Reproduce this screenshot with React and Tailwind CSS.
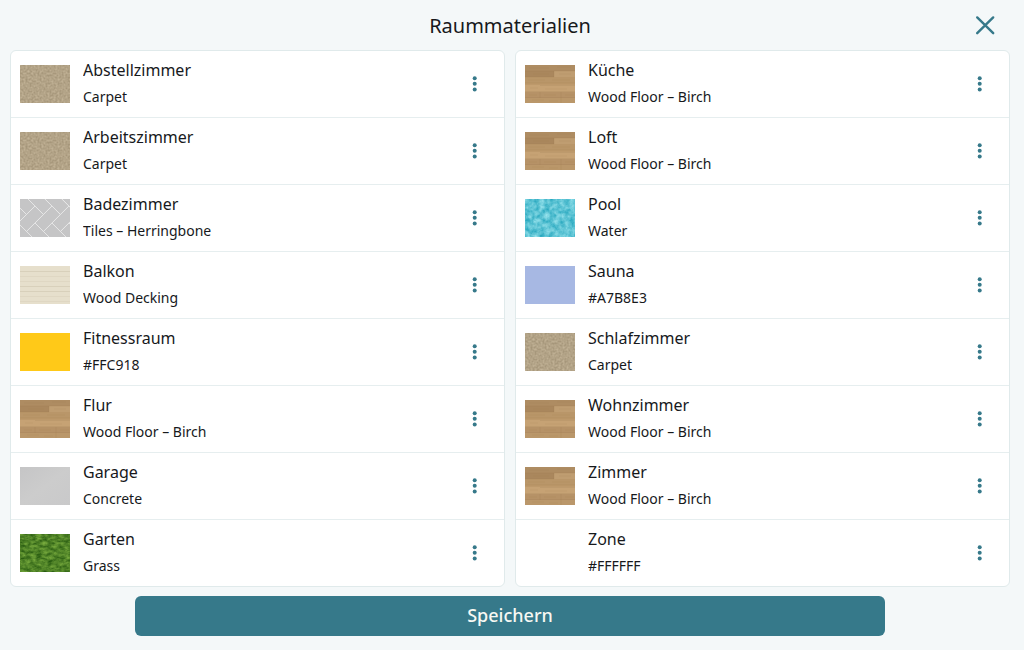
import { useId } from "react";

const leftRooms = [
  { name: "Abstellzimmer", material: "Carpet" },
  { name: "Arbeitszimmer", material: "Carpet" },
  { name: "Badezimmer", material: "Tiles – Herringbone" },
  { name: "Balkon", material: "Wood Decking" },
  { name: "Fitnessraum", material: "#FFC918" },
  { name: "Flur", material: "Wood Floor – Birch" },
  { name: "Garage", material: "Concrete" },
  { name: "Garten", material: "Grass" },
];

const rightRooms = [
  { name: "Küche", material: "Wood Floor – Birch" },
  { name: "Loft", material: "Wood Floor – Birch" },
  { name: "Pool", material: "Water" },
  { name: "Sauna", material: "#A7B8E3" },
  { name: "Schlafzimmer", material: "Carpet" },
  { name: "Wohnzimmer", material: "Wood Floor – Birch" },
  { name: "Zimmer", material: "Wood Floor – Birch" },
  { name: "Zone", material: "#FFFFFF" },
];

// Grain laid over a base colour; the matrix maps noise to tints around that colour.
function Grain({ base, frequency, matrix, octaves = 2 }) {
  const id = useId();
  return (
    <>
      <filter id={id} x="0" y="0" width="100%" height="100%" colorInterpolationFilters="sRGB">
        <feTurbulence type="fractalNoise" baseFrequency={frequency} numOctaves={octaves} seed="4" />
        <feColorMatrix values={matrix} />
      </filter>
      <rect width="50" height="38" fill={base} />
      <rect width="50" height="38" filter={`url(#${id})`} />
    </>
  );
}

function Birch() {
  return (
    <>
      <rect width="50" height="38" fill="#bc9a6f" />
      <rect width="50" height="6" fill="#ae8c62" />
      <rect y="6" width="29" height="6" fill="#aa875d" />
      <rect x="29" y="6" width="21" height="6" fill="#bf9d71" />
      <rect y="12" width="50" height="6" fill="#b99669" />
      <rect y="18" width="50" height="3" fill="#bd996b" />
      <rect y="20" width="50" height="7" fill="#c6a274" />
      <rect y="27" width="50" height="6" fill="#b69267" />
      <rect y="33" width="50" height="5" fill="#ba976a" />
      <path
        d="M0 6h50M0 12h29M29 6v6M0 18h50M15 20.5h35M0 26.5h50M15 27v6M36 27v11M0 32.5h50"
        stroke="#98744c"
        strokeWidth="0.5"
        opacity="0.35"
        fill="none"
      />
      <path
        d="M4 3h20M32 2h14M8 9h16M34 9h12M3 15h17M27 15h18M5 23h8M20 24h22M4 30h8M19 30h12M40 30h9M7 35h12M24 36h9"
        stroke="#9e7950"
        strokeWidth="0.6"
        opacity="0.2"
        fill="none"
      />
    </>
  );
}

// Each pair is one tile along the diagonal and one across it, on a grid of tile widths.
const tilePairs = [-4, 0, 4].flatMap((shift) =>
  [-5, -4, -3, -2, -1, 0, 1, 2, 3, 4, 5].map((step) => [shift + step, step]),
);

function Herringbone() {
  return (
    <>
      <rect width="50" height="38" fill="#c5c5c6" />
      <g transform="translate(15 24) rotate(-45)" fill="none" stroke="#e6e6e6" strokeWidth="0.9">
        {tilePairs.map(([a, b]) => (
          <g key={`${a},${b}`}>
            <rect x={a * 12} y={b * 12} width="24" height="12" />
            <rect x={(a + 2) * 12} y={(b - 1) * 12} width="12" height="24" />
          </g>
        ))}
      </g>
    </>
  );
}

function Decking() {
  return (
    <>
      <rect width="50" height="38" fill="#e6dfcc" />
      <path d="M0 5.5h50M0 20.5h50M0 25.5h50" stroke="#d8d0bb" fill="none" />
      <path d="M0 10.5h50M0 15.5h50M0 30.5h50M0 35.5h50" stroke="#dfd7c3" fill="none" />
    </>
  );
}

function Concrete() {
  const id = useId();
  return (
    <>
      <linearGradient id={id} x1="0" y1="0" x2="1" y2="1">
        <stop offset="0" stopColor="#c5c5c6" />
        <stop offset="0.5" stopColor="#cccccc" />
        <stop offset="1" stopColor="#c9c9ca" />
      </linearGradient>
      <rect width="50" height="38" fill={`url(#${id})`} />
    </>
  );
}

const textures = {
  Carpet: (
    <Grain
      base="#b3a487"
      frequency="0.5"
      matrix="0.2 0 0 0 0.6  0.2 0 0 0 0.54  0.2 0 0 0 0.43  0 0 0 0 1"
    />
  ),
  "Tiles – Herringbone": <Herringbone />,
  "Wood Decking": <Decking />,
  "Wood Floor – Birch": <Birch />,
  Concrete: <Concrete />,
  Grass: (
    <Grain
      base="#4b822b"
      frequency="0.18 0.35"
      octaves={3}
      matrix="0.45 0 0 0 0.09  0.45 0 0 0 0.29  0.25 0 0 0 0.03  0 0 0 0 1"
    />
  ),
  Water: (
    <Grain
      base="#5cc5d6"
      frequency="0.2"
      octaves={3}
      matrix="0.6 0 0 0 0.07  0.32 0 0 0 0.61  0.25 0 0 0 0.71  0 0 0 0 1"
    />
  ),
};

function Swatch({ material }) {
  return (
    <svg viewBox="0 0 50 38" className="h-[38px] w-[50px] shrink-0" aria-hidden="true">
      {textures[material] ?? <rect width="50" height="38" fill={material} />}
    </svg>
  );
}

function RoomList({ rooms }) {
  return (
    <ul className="min-w-0 divide-y divide-[#e6eeef] rounded-md border border-[#e0eaeb] bg-white">
      {rooms.map((room) => (
        <li key={room.name} className="flex items-center px-[9px]">
          <Swatch material={room.material} />
          <div className="ml-[13px] min-w-0 flex-1 pt-1.5 pb-1.5">
            <h2 className="truncate text-base leading-[26px]">{room.name}</h2>
            <p className="truncate text-sm leading-7">{room.material}</p>
          </div>
          <button
            type="button"
            aria-label={`Optionen für ${room.name}`}
            className="flex size-10 shrink-0 items-center justify-center text-[#36798a]"
          >
            <svg viewBox="0 0 6 18" className="h-[18px] w-[6px]" fill="currentColor" aria-hidden="true">
              <circle cx="2.7" cy="3.2" r="2" />
              <circle cx="2.7" cy="8.8" r="2" />
              <circle cx="2.7" cy="14.4" r="2" />
            </svg>
          </button>
        </li>
      ))}
    </ul>
  );
}

export default function App() {
  return (
    <main className="min-h-screen bg-[#f4f8f9] pr-3.5 pb-3.5 pl-2.5 font-['Noto_Sans',sans-serif] text-[#17191c]">
      <header className="grid h-[50px] grid-cols-[50px_1fr_50px] items-center">
        <h1 className="col-start-2 pt-0.5 text-center text-xl">Raummaterialien</h1>
        <button
          type="button"
          aria-label="Schließen"
          className="flex size-[50px] items-center justify-center text-[#36798a]"
        >
          <svg viewBox="0 0 20 20" className="size-5" fill="none" stroke="currentColor" strokeWidth="2.4" strokeLinecap="round" aria-hidden="true">
            <path d="M2.2 2.4L18.2 18.2M18.2 2.4L2.2 18.2" />
          </svg>
        </button>
      </header>
      <div className="grid grid-cols-2 gap-2.5">
        <RoomList rooms={leftRooms} />
        <RoomList rooms={rightRooms} />
      </div>
      <button
        type="button"
        className="mx-auto mt-[9px] block h-10 w-3/4 rounded-md bg-[#36798a] pb-0.5 text-lg font-medium text-[#f7f8f3]"
      >
        Speichern
      </button>
    </main>
  );
}
